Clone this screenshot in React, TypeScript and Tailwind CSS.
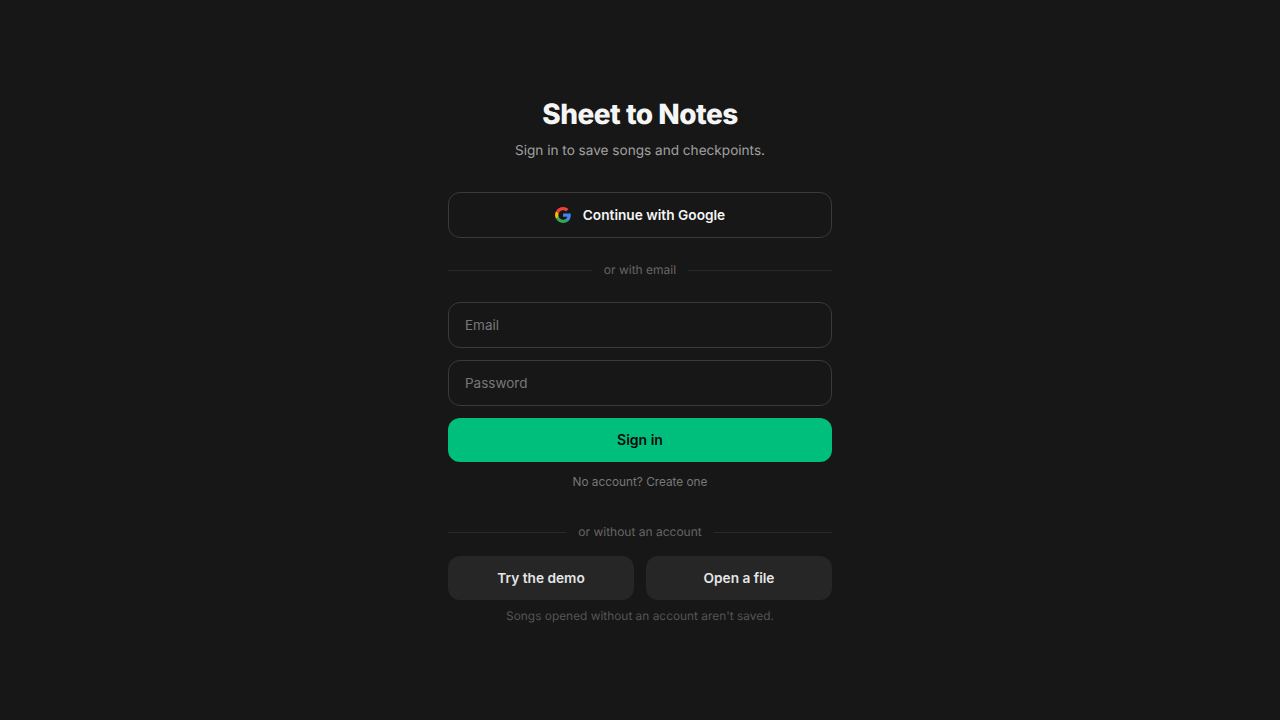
import React from 'react';

const GoogleIcon = () => (
  <svg width="16" height="16" viewBox="1 1 21.8 22" aria-hidden="true">
    <path fill="#4285F4" d="M22.56 12.25c0-.78-.07-1.53-.2-2.25H12v4.26h5.92c-.26 1.37-1.04 2.53-2.21 3.31v2.77h3.57c2.08-1.92 3.28-4.74 3.28-8.09z" />
    <path fill="#34A853" d="M12 23c2.97 0 5.46-.98 7.28-2.66l-3.57-2.77c-.98.66-2.23 1.06-3.71 1.06-2.86 0-5.29-1.93-6.16-4.53H2.18v2.84C3.99 20.53 7.7 23 12 23z" />
    <path fill="#FBBC05" d="M5.84 14.09c-.22-.66-.35-1.36-.35-2.09s.13-1.43.35-2.09V7.07H2.18C1.43 8.55 1 10.22 1 12s.43 3.45 1.18 4.93l2.85-2.22.81-.62z" />
    <path fill="#EA4335" d="M12 5.38c1.62 0 3.06.56 4.21 1.64l3.15-3.15C17.45 2.09 14.97 1 12 1 7.7 1 3.99 3.47 2.18 7.07l3.66 2.84c.87-2.6 3.3-4.53 6.16-4.53z" />
  </svg>
);

const Divider = ({ label }: { label: string }) => (
  <div className="flex items-center gap-3">
    <div className="h-px flex-1 bg-[#2a2a2a]" />
    <span className="text-xs leading-4 text-[#666666]">{label}</span>
    <div className="h-px flex-1 bg-[#2a2a2a]" />
  </div>
);

const TextField = ({ type, placeholder }: { type: string; placeholder: string }) => (
  <input
    type={type}
    placeholder={placeholder}
    className="h-[46px] w-full rounded-xl border border-[#3a3a3a] bg-transparent px-4 text-[13.5px] text-white outline-none placeholder:text-[#777777]"
  />
);

export default function App() {
  return (
    <div
      className="flex min-h-screen items-center justify-center bg-[#171717] antialiased [text-rendering:geometricPrecision]"
      style={{ fontFamily: 'Inter, "Noto Sans", sans-serif' }}
    >
      <div className="flex w-[384px] flex-col pt-0.5">
        <div className="mb-[30px] text-center">
          <h1 className="text-[28px] leading-8 font-extrabold tracking-[-0.5px] text-[#f5f5f5]">Sheet to Notes</h1>
          <p className="mt-2.5 text-[13.6px] leading-[22px] text-[#a0a0a0]">Sign in to save songs and checkpoints.</p>
        </div>

        <button className="flex h-[46px] w-full items-center justify-center gap-3 rounded-xl border border-[#3a3a3a] text-[13.7px] font-semibold text-[#f5f5f5]">
          <GoogleIcon />
          Continue with Google
        </button>

        <div className="my-6">
          <Divider label="or with email" />
        </div>

        <div className="flex flex-col gap-3">
          <TextField type="email" placeholder="Email" />
          <TextField type="password" placeholder="Password" />
          <button className="h-11 w-full rounded-xl bg-[#00bf7d] text-sm font-semibold text-[#0a0a0a]">Sign in</button>
        </div>

        <button className="mt-3 text-[11.8px] leading-4 text-[#777777]">No account? Create one</button>

        <div className="mt-[34px] mb-4">
          <Divider label="or without an account" />
        </div>

        <div className="grid grid-cols-2 gap-3">
          <button className="h-11 rounded-xl bg-[#262626] text-[13.7px] font-semibold text-[#e5e5e5]">Try the demo</button>
          <button className="h-11 rounded-xl bg-[#262626] text-[13.7px] font-semibold text-[#e5e5e5]">Open a file</button>
        </div>

        <p className="mt-2 text-center text-[11.9px] leading-4 text-[#555555]">Songs opened without an account aren't saved.</p>
      </div>
    </div>
  );
}
